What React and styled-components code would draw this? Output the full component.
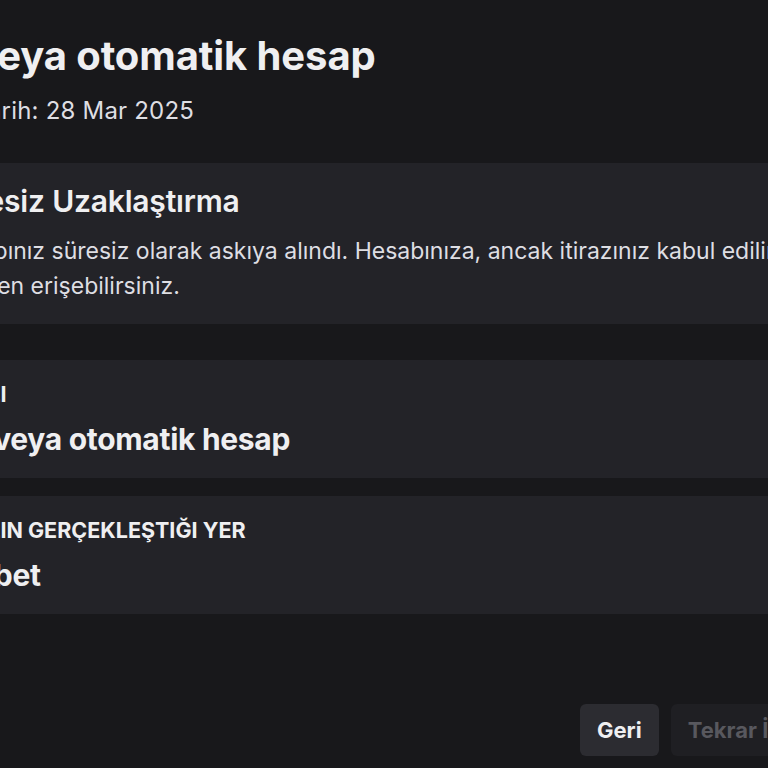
import styled, { createGlobalStyle } from 'styled-components'

const Global = createGlobalStyle`
  html, body {
    margin: 0;
    padding: 0;
    background: #18181b;
  }
  body {
    font-family: Inter, "Noto Sans", sans-serif;
    color: #efeff1;
  }
`

const Viewport = styled.div`
  width: 768px;
  height: 768px;
  overflow: hidden;
  background: #18181b;
`

const Content = styled.div`
  width: 1100px;
  margin-left: -62px;
  display: flex;
  flex-direction: column;
`

const Header = styled.header`
  padding: 32px 0 0 36px;
  display: flex;
  flex-direction: column;
`

const Title = styled.h1`
  margin: 0;
  font-size: 40px;
  font-weight: 700;
  line-height: 48px;
  letter-spacing: -0.1px;
  color: #efeff1;
`

const DateLine = styled.p`
  margin: 15px 0 0;
  font-size: 24px;
  line-height: 32px;
  letter-spacing: 0.2px;
  color: #dedee3;
`

const Card = styled.section`
  background: #232328;
  padding: ${p => (p.$big ? '18px 0 20px' : '21px 0 21px')};
  margin-top: ${p => p.$gap}px;
  display: flex;
  flex-direction: column;
`

const CardTitle = styled.h2`
  margin: 0;
  font-size: 30px;
  font-weight: 600;
  line-height: 40px;
  letter-spacing: -0.2px;
`

const Body = styled.p`
  margin: 13px 0 0;
  font-size: 23px;
  line-height: 35px;
  color: #dedee3;
`

const Label = styled.div`
  font-size: 21.5px;
  font-weight: 700;
  line-height: 26px;
  text-transform: uppercase;
  color: #efeff1;
`

const Value = styled.div`
  margin-top: 14px;
  font-size: 30px;
  font-weight: 700;
  line-height: 36px;
  letter-spacing: -0.3px;
`

const Actions = styled.div`
  margin-top: 90px;
  padding-left: 642px;
  display: flex;
  gap: 12px;
`

const Button = styled.button`
  height: 52px;
  padding: 0 17px;
  border: none;
  border-radius: 6px;
  font-family: Inter, "Noto Sans", sans-serif;
  font-size: 22px;
  font-weight: 700;
  background: ${p => (p.$disabled ? '#1f1f23' : '#2c2c31')};
  color: ${p => (p.$disabled ? '#58585e' : '#efeff1')};
  white-space: nowrap;
`

const details = [
  { label: 'İhlali', value: 'Bot veya otomatik hesap', gap: 36 },
  { label: 'İhlalin gerçekleştiği yer', value: 'Sohbet', gap: 18 },
]

const App = () => {
  return (
    <Viewport>
      <Global />
      <Content>
        <Header>
          <Title>veya otomatik hesap</Title>
          <DateLine>Tarih: 28 Mar 2025</DateLine>
        </Header>
        <Card $big $gap={36}>
          <CardTitle>Süresiz Uzaklaştırma</CardTitle>
          <Body>
            Hesabınız süresiz olarak askıya alındı. Hesabınıza, ancak itirazınız kabul edilirse
            <br />
            yeniden erişebilirsiniz.
          </Body>
        </Card>
        {details.map(d => (
          <Card key={d.label} $gap={d.gap}>
            <Label>{d.label}</Label>
            <Value>{d.value}</Value>
          </Card>
        ))}
        <Actions>
          <Button>Geri</Button>
          <Button $disabled>Tekrar İtiraz Et</Button>
        </Actions>
      </Content>
    </Viewport>
  )
}

export default App
